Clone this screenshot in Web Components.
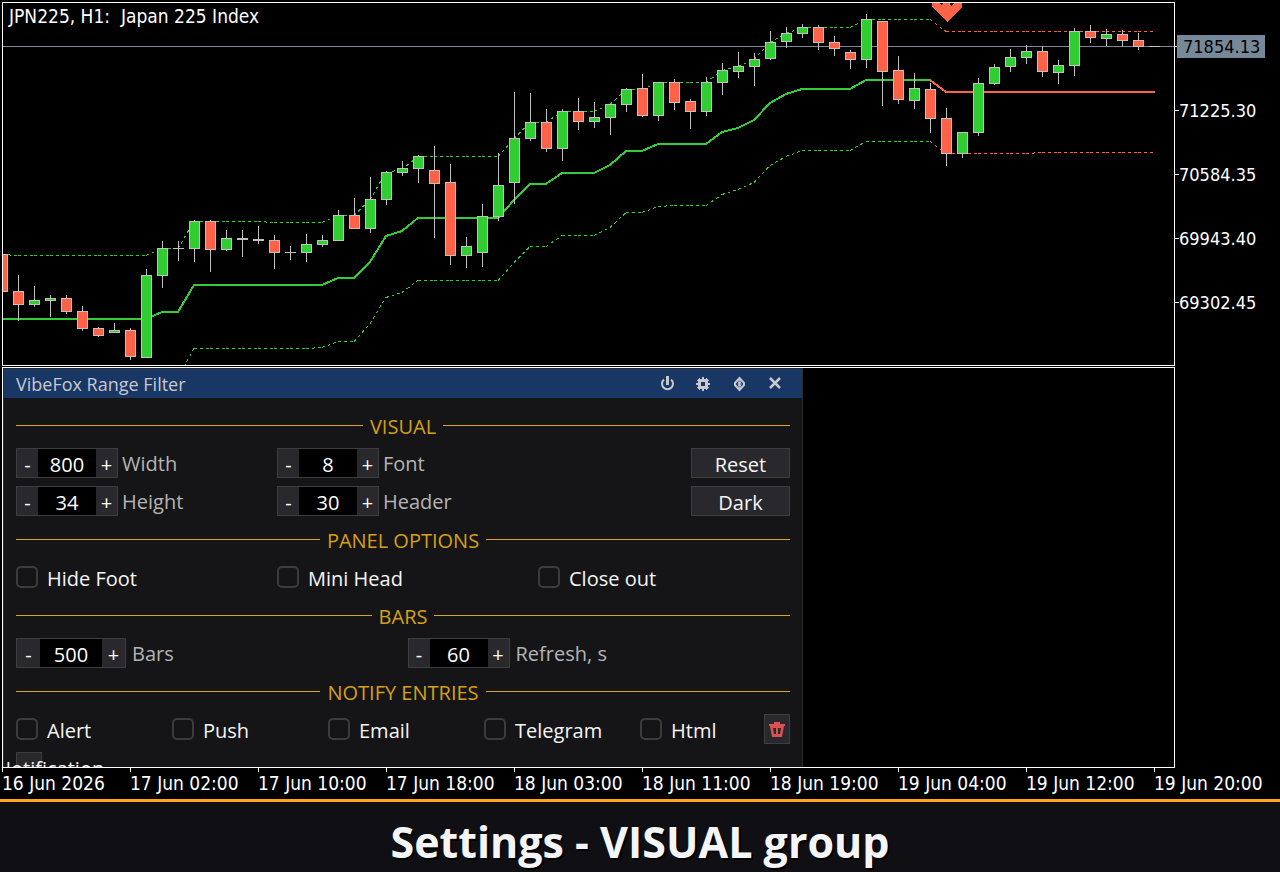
<!DOCTYPE html>
<html lang="en">
<head>
<meta charset="utf-8">
<meta name="viewport" content="width=device-width, initial-scale=1">
<title>VibeFox Range Filter</title>
<style>
  body {
    margin: 0;
    background: #000;
    color: #fff;
  }
</style>
</head>
<body>

<terminal-app></terminal-app>

<script>
const LIME = '#32cd32';
const TOMATO = '#ff6347';
const SILVER = '#c0c0c0';

// one row per hour: high, body top, body bottom, low, direction (u / d / - for a doji)
const candles = [
  [251, 251, 289, 289, 'd'], [272, 288, 302, 318, 'd'], [283, 297, 302, 304, 'u'],
  [292, 295, 298, 314, 'u'], [292, 295, 309, 311, 'd'], [303, 308, 326, 328, 'd'],
  [324, 325, 333, 334, 'd'], [320, 327, 330, 330, 'u'], [325, 327, 354, 357, 'd'],
  [266, 272, 355, 355, 'u'], [238, 245, 273, 285, 'u'], [238, 245, 246, 258, '-'],
  [217, 218, 246, 259, 'u'], [217, 218, 247, 269, 'd'], [227, 235, 247, 248, 'u'],
  [227, 235, 237, 254, '-'], [223, 236, 238, 241, '-'], [232, 237, 250, 266, 'd'],
  [243, 249, 250, 257, '-'], [231, 241, 250, 259, 'u'], [232, 237, 242, 244, 'u'],
  [207, 212, 238, 238, 'u'], [195, 212, 226, 226, 'd'], [174, 196, 226, 230, 'u'],
  [168, 169, 197, 202, 'u'], [158, 165, 170, 173, 'u'], [152, 153, 166, 180, 'u'],
  [143, 167, 181, 235, 'd'], [161, 179, 253, 262, 'd'], [234, 243, 253, 265, 'u'],
  [201, 213, 250, 264, 'u'], [150, 182, 214, 218, 'u'], [89, 135, 180, 201, 'u'],
  [90, 119, 136, 138, 'u'], [106, 119, 146, 149, 'd'], [106, 108, 146, 158, 'u'],
  [95, 108, 119, 127, 'd'], [99, 114, 119, 125, 'u'], [101, 101, 115, 132, 'u'],
  [85, 86, 102, 109, 'u'], [71, 85, 113, 114, 'd'], [79, 79, 113, 118, 'u'],
  [76, 79, 100, 107, 'd'], [96, 98, 109, 126, 'd'], [74, 79, 109, 113, 'u'],
  [60, 67, 80, 92, 'u'], [49, 63, 69, 75, 'u'], [50, 56, 64, 83, 'u'],
  [28, 39, 56, 57, 'u'], [24, 30, 39, 45, 'u'], [21, 24, 31, 35, 'u'],
  [22, 24, 40, 47, 'd'], [33, 39, 46, 53, 'd'], [47, 49, 57, 66, 'd'],
  [11, 16, 57, 65, 'u'], [18, 18, 69, 103, 'd'], [53, 67, 97, 101, 'd'],
  [70, 85, 98, 106, 'u'], [80, 86, 116, 130, 'd'], [105, 115, 151, 163, 'd'],
  [129, 129, 151, 155, 'u'], [75, 80, 130, 133, 'u'], [61, 64, 81, 82, 'u'],
  [46, 54, 64, 69, 'u'], [42, 48, 55, 61, 'u'], [43, 48, 69, 74, 'd'],
  [57, 62, 70, 81, 'u'], [25, 28, 63, 73, 'u'], [22, 28, 35, 40, 'd'],
  [26, 31, 36, 43, 'u'], [27, 31, 38, 44, 'd'], [30, 37, 44, 47, 'd'],
  [43, 43, 44, 44, '-']
];

// bar number and level at each turn of the filter and its bands
const TURN = 58;
const filterLine = [[0, 316], [9, 316], [10, 309], [11, 309], [12, 282], [20, 282], [21, 275], [22, 275], [23, 259],
  [24, 233], [25, 228], [26, 215], [31, 215], [32, 197], [33, 181], [34, 181], [35, 170], [37, 170], [38, 162],
  [39, 148], [40, 148], [41, 141], [44, 141], [45, 129], [46, 125], [47, 117], [48, 100], [49, 91], [50, 86],
  [53, 86], [54, 77], [58, 77], [59, 89], [72, 89]];
const upperBand = [[0, 251], [1, 252], [9, 252], [10, 245], [11, 245], [12, 218], [16, 218], [17, 219], [20, 219],
  [21, 212], [22, 212], [23, 196], [24, 169], [25, 166], [26, 153], [31, 153], [32, 135], [33, 119], [34, 119],
  [35, 108], [37, 108], [38, 101], [39, 86], [40, 86], [41, 79], [44, 79], [45, 67], [46, 63], [47, 56], [48, 39],
  [49, 30], [50, 24], [53, 24], [54, 16], [58, 16], [59, 28], [72, 28]];
const lowerBand = [[11, 374], [12, 345], [19, 345], [20, 344], [21, 338], [22, 338], [23, 320], [24, 294], [25, 289],
  [26, 277], [31, 277], [32, 259], [33, 243], [34, 243], [35, 232], [37, 232], [38, 224], [39, 209], [40, 209],
  [41, 203], [42, 202], [44, 202], [45, 191], [46, 186], [47, 179], [48, 162], [49, 153], [50, 147], [53, 147],
  [54, 138], [58, 138], [59, 150], [64, 150], [65, 149], [72, 149]];

const barX = (i) => i * 16 - 1;

// every bar gets its own subpath, so the dashes start again at each one
function bandPath(points, from, to) {
  let d = '';
  for (let i = 1; i < points.length; i++) {
    const [a, ya] = points[i - 1];
    const [b, yb] = points[i];
    for (let n = a; n < b; n++) {
      if (n < from || n >= to) continue;
      const y1 = ya + (yb - ya) * (n - a) / (b - a);
      const y2 = ya + (yb - ya) * (n + 1 - a) / (b - a);
      d += `M${barX(n)} ${y1 + 0.5}L${barX(n + 1)} ${y2 + 0.5}`;
    }
  }
  return d;
}

function linePath(points, from, to) {
  return points
    .filter(([n]) => n >= from && n <= to)
    .map(([n, y], i) => `${i ? 'L' : 'M'}${barX(n)} ${y}`)
    .join('');
}

function candleMarkup([high, top, bottom, low, kind], i) {
  const x = barX(i);
  const wick = `<rect x="${x}" y="${high}" width="1" height="${low - high}" fill="${SILVER}"/>`;
  const body = `<rect x="${x - 5}" y="${top}" width="11" height="${bottom - top}" fill="${SILVER}"/>`;
  if (kind === '-') return wick + body;
  const fill = kind === 'u' ? LIME : TOMATO;
  return `${wick}${body}<rect x="${x - 4}" y="${top + 1}" width="9" height="${bottom - top - 2}" fill="${fill}"/>`;
}

class PriceChart extends HTMLElement {
  constructor() {
    super();
    this.attachShadow({ mode: 'open' });
  }

  connectedCallback() {
    this.render();
  }

  render() {
    this.shadowRoot.innerHTML = `
    <style>
      :host {
        display: block;
        position: relative;
        border: 1px solid #fff;
      }
      svg {
        display: block;
        width: 100%;
        height: 362px;
      }
      .symbol {
        position: absolute;
        left: 6px;
        top: 1px;
        font-size: 19px;
        line-height: 24px;
        white-space: pre;
      }
    </style>
    <svg shape-rendering="crispEdges" fill="none" aria-hidden="true">
      <rect x="0" y="43" width="100%" height="1" fill="#778899"/>
      <g stroke="${LIME}" stroke-dasharray="3 3">
        <path d="${bandPath(upperBand, 0, TURN)}"/>
        <path d="${bandPath(lowerBand, 0, TURN)}"/>
      </g>
      <g stroke="${TOMATO}" stroke-dasharray="3 3">
        <path d="${bandPath(upperBand, TURN, 72)}"/>
        <path d="${bandPath(lowerBand, TURN, 72)}"/>
      </g>
      <g stroke-width="2" stroke-linejoin="round">
        <path stroke="${LIME}" d="${linePath(filterLine, 0, TURN)}"/>
        <path stroke="${TOMATO}" d="${linePath(filterLine, TURN, 72)}H1152"/>
      </g>
      ${candles.map(candleMarkup).join('')}
      <path fill="${TOMATO}" d="M929 0H936L939 3L940 0H947L948 3L951 0H959V4L944 19L929 4Z"/>
    </svg>
    <div class="symbol"><slot></slot></div>
    `;
  }
}
customElements.define('price-chart', PriceChart);

class PriceAxis extends HTMLElement {
  constructor() {
    super();
    this.attachShadow({ mode: 'open' });
  }

  connectedCallback() {
    const prices = this.getAttribute('prices').split(' ');
    this.shadowRoot.innerHTML = `
    <style>
      :host {
        display: block;
        box-sizing: border-box;
        padding-top: 12px;
      }
      .price {
        display: flex;
        align-items: center;
        height: 64px;
      }
      .price::before {
        content: "";
        width: 4px;
        height: 1px;
        background: #fff;
      }
      .current::before {
        width: 2px;
      }
      .current span {
        padding: 0 5px 0 6px;
        background: #778899;
        color: #000;
      }
      span {
        line-height: 23px;
      }
    </style>
    ${prices.map((p, i) => `<div class="price ${i ? '' : 'current'}"><span>${p}</span></div>`).join('')}
    `;
  }
}
customElements.define('price-axis', PriceAxis);

class TimeAxis extends HTMLElement {
  constructor() {
    super();
    this.attachShadow({ mode: 'open' });
  }

  connectedCallback() {
    const times = this.getAttribute('times').split(',');
    this.shadowRoot.innerHTML = `
    <style>
      :host {
        display: flex;
        height: 31px;
        overflow: hidden;
        font-size: 19px;
      }
      .time {
        flex: none;
        width: 128px;
        line-height: 23px;
        white-space: nowrap;
      }
      .time::before {
        content: "";
        display: block;
        width: 1px;
        height: 4px;
        background: #fff;
      }
    </style>
    ${times.map((t) => `<div class="time">${t}</div>`).join('')}
    `;
  }
}
customElements.define('time-axis', TimeAxis);

class PanelHeader extends HTMLElement {
  constructor() {
    super();
    this.attachShadow({ mode: 'open' });
  }

  connectedCallback() {
    this.shadowRoot.innerHTML = `
    <style>
      :host {
        display: flex;
        align-items: center;
        height: 29px;
        padding: 0 9px 0 12px;
        background: #193764;
        color: #c8c8d0;
      }
      h2 {
        flex: 1;
        margin: 0;
        padding-top: 2px;
        font-size: 18px;
        font-weight: 400;
        line-height: 27px;
      }
      button {
        display: flex;
        align-items: center;
        justify-content: center;
        width: 36px;
        height: 29px;
        padding: 0;
        border: none;
        background: none;
        color: inherit;
      }
    </style>
    <h2><slot></slot></h2>
    <button type="button" aria-label="Power">
      <svg width="16" height="16" fill="none" stroke="currentColor" stroke-width="2">
        <path d="M5 3.500A5.500 5.500 0 1 0 12 3.500"/>
        <path stroke-width="3" d="M8.500 0V9"/>
      </svg>
    </button>
    <button type="button" aria-label="Settings">
      <svg width="16" height="16" fill="none" stroke="currentColor">
        <rect x="4.500" y="4.500" width="7" height="7" stroke-width="3"/>
        <path stroke-width="2" d="M8 1V3M8 13V15M1 8H3M13 8H15"/>
        <path d="M4.500 2V3M11.500 2V3M4.500 13V14M11.500 13V14M2 4.500H3M2 11.500H3M13 4.500H14M13 11.500H14"/>
      </svg>
    </button>
    <button type="button" aria-label="Collapse">
      <svg width="16" height="16" fill="none" stroke="currentColor">
        <path stroke-width="2" d="M8.500 2L13 7V9L8.500 14L4 9V7Z"/>
        <path d="M8.500 4Q5.500 8 8.500 12Q11.500 8 8.500 4Z"/>
        <path stroke-width="1" d="M8.500 6V10"/>
      </svg>
    </button>
    <button type="button" aria-label="Close">
      <svg width="16" height="16" fill="none" stroke="currentColor" stroke-width="2.500">
        <path d="M3 2L13 12M13 2L3 12"/>
      </svg>
    </button>
    `;
  }
}
customElements.define('panel-header', PanelHeader);

class GroupTitle extends HTMLElement {
  constructor() {
    super();
    this.attachShadow({ mode: 'open' });
  }

  connectedCallback() {
    this.shadowRoot.innerHTML = `
    <style>
      :host {
        display: flex;
        align-items: center;
        gap: 7px;
        height: 30px;
        color: #d4a017;
      }
      :host::before, :host::after {
        content: "";
        flex: 1;
        height: 1px;
        background: #daa520;
      }
      h3 {
        margin: 0;
        padding-top: 4px;
        font-size: 20px;
        font-weight: 400;
        line-height: 26px;
      }
    </style>
    <h3><slot></slot></h3>
    `;
  }
}
customElements.define('group-title', GroupTitle);

class NumberStepper extends HTMLElement {
  constructor() {
    super();
    this.attachShadow({ mode: 'open' });
  }

  connectedCallback() {
    this.render();
    const input = this.shadowRoot.querySelector('input');
    this.shadowRoot.querySelectorAll('button').forEach((button) => {
      button.addEventListener('click', () => {
        input.value = Number(input.value) + Number(button.dataset.step);
      });
    });
  }

  render() {
    this.shadowRoot.innerHTML = `
    <style>
      :host {
        --key: 21px;
        --field: 58px;
        --space: 4px;
        display: flex;
        align-items: center;
        gap: var(--space);
        height: 30px;
      }
      :host([spaced]) {
        --space: 6px;
      }
      :host([wide]) {
        --key: 23px;
        --field: 62px;
      }
      .box {
        display: flex;
        height: 28px;
        border: 1px solid #3e3e40;
      }
      button, input {
        box-sizing: border-box;
        height: 28px;
        margin: 0;
        padding: 3px 0 0;
        border: none;
        border-radius: 0;
        font: inherit;
        line-height: 25px;
        color: #fff;
        text-align: center;
      }
      button {
        width: var(--key);
        background: #29292d;
      }
      input {
        width: var(--field);
        background: #000;
      }
      label {
        padding-top: 2px;
        color: #b4b4b4;
        line-height: 28px;
      }
    </style>
    <div class="box">
      <button type="button" data-step="-1" aria-label="Less">-</button>
      <input id="field" type="text" inputmode="numeric" value="${this.getAttribute('value')}">
      <button type="button" data-step="1" aria-label="More">+</button>
    </div>
    <label for="field"><slot></slot></label>
    `;
  }
}
customElements.define('number-stepper', NumberStepper);

class CheckOption extends HTMLElement {
  constructor() {
    super();
    this.attachShadow({ mode: 'open' });
  }

  connectedCallback() {
    this.shadowRoot.innerHTML = `
    <style>
      :host {
        display: block;
      }
      label {
        display: flex;
        align-items: center;
        gap: 9px;
        height: 30px;
      }
      input {
        appearance: none;
        box-sizing: border-box;
        width: 22px;
        height: 22px;
        margin: 0;
        border: 2px solid #3c3c3e;
        border-radius: 5px;
      }
      input:checked {
        background: #d4a017;
      }
      span {
        padding-top: 3px;
        line-height: 27px;
        color: #f5f5f5;
      }
    </style>
    <label><input type="checkbox"><span><slot></slot></span></label>
    `;
  }
}
customElements.define('check-option', CheckOption);

class PanelButton extends HTMLElement {
  constructor() {
    super();
    this.attachShadow({ mode: 'open' });
  }

  connectedCallback() {
    this.shadowRoot.innerHTML = `
    <style>
      :host {
        display: block;
        width: 99px;
      }
      :host([small]) {
        width: 26px;
      }
      button {
        display: flex;
        align-items: center;
        justify-content: center;
        box-sizing: border-box;
        width: 100%;
        height: 30px;
        padding: 3px 0 0;
        border: 1px solid #3e3e40;
        background: #29292d;
        color: #f5f5f5;
        font: inherit;
        line-height: 25px;
      }
      :host([small]) button {
        padding: 0;
      }
    </style>
    <button type="button" aria-label="${this.getAttribute('label') || this.textContent}"><slot></slot></button>
    `;
  }
}
customElements.define('panel-button', PanelButton);

class SettingsPanel extends HTMLElement {
  constructor() {
    super();
    this.attachShadow({ mode: 'open' });
  }

  connectedCallback() {
    this.render();
  }

  render() {
    this.shadowRoot.innerHTML = `
    <style>
      :host {
        display: block;
        box-sizing: border-box;
        max-width: 800px;
        border: 1px solid #2c2c2e;
        background: #151517;
        font: 20px/28px "Open Sans", "Noto Sans", sans-serif;
      }
      form {
        display: flex;
        flex-direction: column;
        gap: 8px;
        padding: 12px;
      }
      .row {
        display: grid;
        gap: 8px 9px;
      }
      .three {
        grid-template-columns: repeat(3, 1fr);
      }
      .two {
        grid-template-columns: repeat(2, 1fr);
      }
      .notify {
        grid-template-columns: repeat(4, 147fr) 115fr 26px;
      }
      .end {
        justify-self: end;
      }
      .more {
        position: relative;
      }
      .more span {
        position: absolute;
        left: -20px;
        top: 3px;
        color: #f5f5f5;
      }
    </style>
    <panel-header>VibeFox Range Filter</panel-header>
    <form>
      <group-title>VISUAL</group-title>
      <div class="row three">
        <number-stepper value="800">Width</number-stepper>
        <number-stepper value="8">Font</number-stepper>
        <panel-button class="end">Reset</panel-button>
        <number-stepper value="34">Height</number-stepper>
        <number-stepper value="30">Header</number-stepper>
        <panel-button class="end">Dark</panel-button>
      </div>
      <group-title>PANEL OPTIONS</group-title>
      <div class="row three">
        <check-option>Hide Foot</check-option>
        <check-option>Mini Head</check-option>
        <check-option>Close out</check-option>
      </div>
      <group-title>BARS</group-title>
      <div class="row two">
        <number-stepper value="500" wide spaced>Bars</number-stepper>
        <number-stepper value="60" spaced>Refresh, s</number-stepper>
      </div>
      <group-title>NOTIFY ENTRIES</group-title>
      <div class="row notify">
        <check-option>Alert</check-option>
        <check-option>Push</check-option>
        <check-option>Email</check-option>
        <check-option>Telegram</check-option>
        <check-option>Html</check-option>
        <panel-button small label="Delete">
          <svg width="16" height="16" fill="#dc5050">
            <path d="M5 1H11V3H16V5H0V3H5Z"/>
            <path fill-rule="evenodd" d="M1 5H15L13 16H3ZM4 7L5 13H7V7ZM9 7V13H11L12 7Z"/>
          </svg>
        </panel-button>
      </div>
      <div class="more">
        <panel-button small label="Notification"></panel-button>
        <span>Notification</span>
      </div>
    </form>
    `;
  }
}
customElements.define('settings-panel', SettingsPanel);

class CaptionBar extends HTMLElement {
  constructor() {
    super();
    this.attachShadow({ mode: 'open' });
  }

  connectedCallback() {
    this.shadowRoot.innerHTML = `
    <style>
      :host {
        display: block;
        border-top: 3px solid #ffa51e;
        background: #101014;
      }
      h1 {
        margin: 0;
        padding: 10px 0 0;
        color: #f5f5f8;
        font: 700 43px/60px "Open Sans", "Noto Sans", sans-serif;
        text-align: center;
        text-shadow: 2px 2px 0 #000;
      }
    </style>
    <h1><slot></slot></h1>
    `;
  }
}
customElements.define('caption-bar', CaptionBar);

class TerminalApp extends HTMLElement {
  constructor() {
    super();
    this.attachShadow({ mode: 'open' });
  }

  connectedCallback() {
    this.render();
  }

  render() {
    this.shadowRoot.innerHTML = `
    <style>
      :host {
        display: flex;
        flex-direction: column;
        height: 100vh;
        font: 18px/24px "DejaVu Sans Condensed", "DejaVu Sans", sans-serif;
      }
      main {
        flex: 1;
        display: flex;
        flex-direction: column;
        min-height: 0;
        padding: 2px 0 0 2px;
      }
      .plots {
        flex: 1;
        display: flex;
        min-height: 0;
      }
      .panes {
        flex: 1;
        display: flex;
        flex-direction: column;
        gap: 1px;
        min-width: 0;
      }
      .indicator {
        flex: 1;
        min-height: 0;
        overflow: hidden;
        border: 1px solid #fff;
      }
      price-axis {
        width: 105px;
      }
    </style>
    <main>
      <div class="plots">
        <div class="panes">
          <price-chart>JPN225, H1:  Japan 225 Index</price-chart>
          <div class="indicator"><settings-panel></settings-panel></div>
        </div>
        <price-axis prices="71854.13 71225.30 70584.35 69943.40 69302.45"></price-axis>
      </div>
      <time-axis times="16 Jun 2026,17 Jun 02:00,17 Jun 10:00,17 Jun 18:00,18 Jun 03:00,18 Jun 11:00,18 Jun 19:00,19 Jun 04:00,19 Jun 12:00,19 Jun 20:00"></time-axis>
    </main>
    <caption-bar>Settings - VISUAL group</caption-bar>
    `;
  }
}
customElements.define('terminal-app', TerminalApp);
</script>
</body>
</html>
